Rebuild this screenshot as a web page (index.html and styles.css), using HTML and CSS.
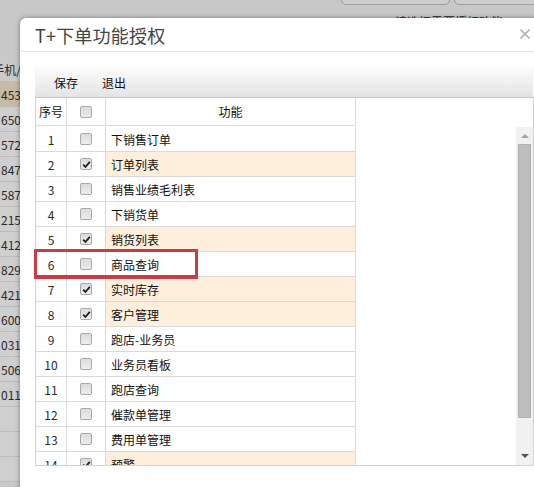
FILE: index.html
```html
<!DOCTYPE html>
<html lang="zh-CN">
<head>
<meta charset="utf-8">
<title>T+下单功能授权</title>
<link rel="stylesheet" href="styles.css">
</head>
<body>
<div class="page">
  <div class="topbar"><span class="tbtn"></span><span class="tbtn wide"></span></div>
  <div class="notice">请选择需要授权功能</div>
  <div class="bgtable">
    <div class="bgcell head">手机/</div>
    <div class="bgcell sel">453</div>
    <div class="bgcell">650</div>
    <div class="bgcell">572</div>
    <div class="bgcell">847</div>
    <div class="bgcell">587</div>
    <div class="bgcell">215</div>
    <div class="bgcell">412</div>
    <div class="bgcell">829</div>
    <div class="bgcell">421</div>
    <div class="bgcell">600</div>
    <div class="bgcell">031</div>
    <div class="bgcell">506</div>
    <div class="bgcell">011</div>
    <div class="bgcell"></div>
    <div class="bgcell"></div>
    <div class="bgcell"></div>
  </div>
</div>

<div class="dialog">
  <div class="dhead">
    <span class="dtitle">T+下单功能授权</span>
    <svg class="close" width="10" height="10" viewBox="0 0 10 10"><path d="M0.5 0.5 L9.5 9.5 M9.5 0.5 L0.5 9.5" stroke="#b4b4b4" stroke-width="1.6" fill="none"/></svg>
  </div>
  <div class="dbody">
    <div class="toolbar"><span>保存</span><span>退出</span></div>
    <div class="grid">
      <div class="ghead">
        <div class="cell c-no">序号</div>
        <div class="cell c-ck"><span class="cb"></span></div>
        <div class="cell c-name center">功能</div>
        <div class="gfill"></div>
      </div>
      <div class="gbody">
        <div class="rows">
          <div class="row"><div class="cell c-no">1</div><div class="cell c-ck"><span class="cb"></span></div><div class="cell c-name">下销售订单</div></div>
          <div class="row on"><div class="cell c-no">2</div><div class="cell c-ck"><span class="cb"><svg width="11" height="11" viewBox="0 0 11 11"><path d="M2.2 5.6 L4.4 8 L8.8 2.8" stroke="#1e1e1e" stroke-width="1.8" fill="none"/></svg></span></div><div class="cell c-name">订单列表</div></div>
          <div class="row"><div class="cell c-no">3</div><div class="cell c-ck"><span class="cb"></span></div><div class="cell c-name">销售业绩毛利表</div></div>
          <div class="row"><div class="cell c-no">4</div><div class="cell c-ck"><span class="cb"></span></div><div class="cell c-name">下销货单</div></div>
          <div class="row on"><div class="cell c-no">5</div><div class="cell c-ck"><span class="cb"><svg width="11" height="11" viewBox="0 0 11 11"><path d="M2.2 5.6 L4.4 8 L8.8 2.8" stroke="#1e1e1e" stroke-width="1.8" fill="none"/></svg></span></div><div class="cell c-name">销货列表</div></div>
          <div class="row"><div class="cell c-no">6</div><div class="cell c-ck"><span class="cb"></span></div><div class="cell c-name">商品查询</div></div>
          <div class="row on"><div class="cell c-no">7</div><div class="cell c-ck"><span class="cb"><svg width="11" height="11" viewBox="0 0 11 11"><path d="M2.2 5.6 L4.4 8 L8.8 2.8" stroke="#1e1e1e" stroke-width="1.8" fill="none"/></svg></span></div><div class="cell c-name">实时库存</div></div>
          <div class="row on"><div class="cell c-no">8</div><div class="cell c-ck"><span class="cb"><svg width="11" height="11" viewBox="0 0 11 11"><path d="M2.2 5.6 L4.4 8 L8.8 2.8" stroke="#1e1e1e" stroke-width="1.8" fill="none"/></svg></span></div><div class="cell c-name">客户管理</div></div>
          <div class="row"><div class="cell c-no">9</div><div class="cell c-ck"><span class="cb"></span></div><div class="cell c-name">跑店-业务员</div></div>
          <div class="row"><div class="cell c-no">10</div><div class="cell c-ck"><span class="cb"></span></div><div class="cell c-name">业务员看板</div></div>
          <div class="row"><div class="cell c-no">11</div><div class="cell c-ck"><span class="cb"></span></div><div class="cell c-name">跑店查询</div></div>
          <div class="row"><div class="cell c-no">12</div><div class="cell c-ck"><span class="cb"></span></div><div class="cell c-name">催款单管理</div></div>
          <div class="row"><div class="cell c-no">13</div><div class="cell c-ck"><span class="cb"></span></div><div class="cell c-name">费用单管理</div></div>
          <div class="row on"><div class="cell c-no">14</div><div class="cell c-ck"><span class="cb"><svg width="11" height="11" viewBox="0 0 11 11"><path d="M2.2 5.6 L4.4 8 L8.8 2.8" stroke="#1e1e1e" stroke-width="1.8" fill="none"/></svg></span></div><div class="cell c-name">预警</div></div>
        </div>
        <div class="gfill"></div>
        <div class="scroll">
          <div class="sarrow"><span class="tri-up"></span></div>
          <div class="thumb"></div>
          <div class="strack"></div>
          <div class="sarrow down"><span class="tri-down"></span></div>
        </div>
      </div>
      <div class="mark"></div>
    </div>
  </div>
</div>
</body>
</html>
```

FILE: styles.css
```css
html, body {
  margin: 0;
  padding: 0;
  overflow: hidden;
}
body {
  width: 534px;
  height: 487px;
  background: #c8c8c8;
  font-family: "Noto Sans CJK SC", "Liberation Sans", sans-serif;
  font-size: 12px;
  color: #222;
  position: relative;
}

/* background page (under the modal mask) */
.page {
  display: flex;
  flex-direction: column;
}
.topbar {
  height: 5px;
  display: flex;
  justify-content: flex-end;
  align-items: flex-end;
  gap: 4px;
  overflow: hidden;
}
.tbtn {
  width: 109px;
  height: 24px;
  flex: none;
  border: 1px solid #9e9e9e;
  border-radius: 5px;
  background: #cdcdcd;
  box-sizing: border-box;
}
.tbtn.wide {
  width: 90px;
  margin-right: -10px;
}
.notice {
  margin-top: 9px;
  height: 16px;
  line-height: 16px;
  text-align: right;
  padding-right: 31px;
  color: #1c1c1c;
  font-size: 12px;
}
.bgtable {
  margin-top: 27px;
  width: 21px;
  display: flex;
  flex-direction: column;
}
.bgcell {
  height: 24px;
  border-bottom: 1px solid #bcbcbc;
  background: #cfcfcf;
  display: flex;
  align-items: center;
  justify-content: flex-end;
  overflow: hidden;
  white-space: nowrap;
  color: #2a2a2a;
  font-size: 12px;
}
.bgcell.head {
  background: #c9c9c9;
}
.bgcell.sel {
  background: #c7bba4;
}

/* dialog */
.dialog {
  position: absolute;
  left: 20px;
  top: 18px;
  width: 528px;
  height: 480px;
  background: #fff;
  border-radius: 6px 6px 0 0;
  box-shadow: 0 0 5px rgba(0, 0, 0, 0.4);
  display: flex;
  flex-direction: column;
}
.dhead {
  height: 33px;
  border-bottom: 1px solid #e4e4e4;
  display: flex;
  align-items: center;
  justify-content: space-between;
  padding: 0 18px 0 15px;
}
.dtitle {
  font-size: 18px;
  color: #444;
  letter-spacing: 0.2px;
}
.close {
  margin-top: -2px;
}
.dbody {
  padding: 16px 15px 0 15px;
}
.toolbar {
  height: 29px;
  display: flex;
  align-items: center;
  gap: 24px;
  padding-left: 19px;
  background: linear-gradient(#fbfbfb, #e4e4e4);
  font-size: 12px;
  color: #111;
}

.grid {
  position: relative;
  width: 499px;
  height: 369px;
  box-sizing: border-box;
  border: 1px solid #d2d2d2;
  border-top-color: #c6c6c6;
}
.ghead {
  display: flex;
  height: 29px;
}
.ghead .cell {
  height: 28px;
  color: #111;
}
.cell {
  box-sizing: border-box;
  border-right: 1px solid #dadada;
  border-bottom: 1px solid #dadada;
  display: flex;
  align-items: center;
  justify-content: center;
  flex: none;
}
.c-no {
  width: 31px;
  color: #2a2a2a;
}
.c-ck {
  width: 39px;
}
.c-name {
  width: 250px;
  justify-content: flex-start;
  padding-left: 5px;
  color: #111;
}
.c-name.center {
  justify-content: center;
  padding-left: 0;
}
.gfill {
  flex: 1;
}
.gbody {
  display: flex;
  height: 338px;
  overflow: hidden;
}
.rows {
  width: 320px;
  flex: none;
  display: flex;
  flex-direction: column;
}
.row {
  display: flex;
  height: 25px;
  flex: none;
}
.row .cell {
  height: 25px;
}
.row.on .c-name {
  background: #fdefdb;
}
.cb {
  width: 12px;
  height: 12px;
  box-sizing: border-box;
  border: 1px solid #a9a9a9;
  border-radius: 2px;
  background: linear-gradient(#dcdcdc, #ececec);
  display: flex;
  align-items: center;
  justify-content: center;
}
.cb svg {
  flex: none;
}

.scroll {
  width: 17px;
  flex: none;
  background: #f1f1f1;
  display: flex;
  flex-direction: column;
}
.sarrow {
  height: 17px;
  display: flex;
  align-items: center;
  justify-content: center;
  flex: none;
}
.sarrow.down {
  height: 19px;
}
.tri-up {
  width: 0;
  height: 0;
  border-left: 4px solid transparent;
  border-right: 4px solid transparent;
  border-bottom: 4px solid #a4a4a4;
}
.tri-down {
  width: 0;
  height: 0;
  border-left: 4px solid transparent;
  border-right: 4px solid transparent;
  border-top: 4px solid #555;
}
.thumb {
  height: 274px;
  margin: 0 2px;
  background: #bdbdbd;
  box-sizing: border-box;
  border: 1px solid #b2b2b2;
  flex: none;
}
.strack {
  flex: 1;
}

.mark {
  position: absolute;
  left: -2px;
  top: 151px;
  width: 164px;
  height: 30px;
  box-sizing: border-box;
  border: 3px solid #cb3b43;
  border-bottom-width: 4px;
}
```
